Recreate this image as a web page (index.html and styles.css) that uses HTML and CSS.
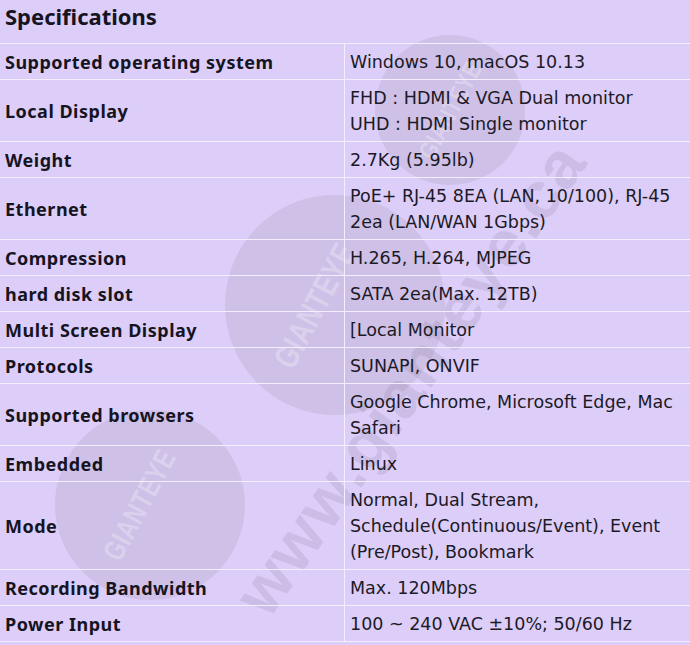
FILE: index.html
```html
<!DOCTYPE html>
<html>
<head>
<meta charset="utf-8">
<link rel="stylesheet" href="styles.css">
</head>
<body>
<div class="page">
  <div class="watermark" aria-hidden="true">
    <div class="wm-circle c1"><span>GIANTEYE</span></div>
    <div class="wm-circle c2"><span>GIANTEYE</span></div>
    <div class="wm-circle c3"><span>GIANTEYE</span></div>
    <div class="wm-url">www.gianteye.ca</div>
  </div>
  <h2 class="title">Specifications</h2>
  <table class="spec">
    <tr><th>Supported operating system</th><td>Windows 10, macOS 10.13</td></tr>
    <tr><th>Local Display</th><td>FHD : HDMI &amp; VGA Dual monitor<br>UHD : HDMI Single monitor</td></tr>
    <tr><th>Weight</th><td>2.7Kg (5.95lb)</td></tr>
    <tr><th>Ethernet</th><td>PoE+ RJ-45 8EA (LAN, 10/100), RJ-45 2ea (LAN/WAN 1Gbps)</td></tr>
    <tr><th>Compression</th><td>H.265, H.264, MJPEG</td></tr>
    <tr><th>hard disk slot</th><td>SATA 2ea(Max. 12TB)</td></tr>
    <tr><th>Multi Screen Display</th><td>[Local Monitor</td></tr>
    <tr><th>Protocols</th><td>SUNAPI, ONVIF</td></tr>
    <tr><th>Supported browsers</th><td>Google Chrome, Microsoft Edge, Mac Safari</td></tr>
    <tr><th>Embedded</th><td>Linux</td></tr>
    <tr><th>Mode</th><td>Normal, Dual Stream,<br>Schedule(Continuous/Event), Event (Pre/Post), Bookmark</td></tr>
    <tr><th>Recording Bandwidth</th><td>Max. 120Mbps</td></tr>
    <tr><th>Power Input</th><td>100 ~ 240 VAC ±10%; 50/60 Hz</td></tr>
  </table>
</div>
</body>
</html>
```
FILE: styles.css
```css
html, body {
  margin: 0;
  padding: 0;
  background: #dccdf9;
}
body {
  font-family: "Noto Sans", "Open Sans", sans-serif;
  color: #16141f;
}
.page {
  position: relative;
  width: 690px;
  height: 645px;
  overflow: hidden;
  background: #dccdf9;
}
.title {
  position: relative;
  z-index: 1;
  margin: 0;
  height: 43px;
  padding: 0 5px;
  font-size: 22px;
  line-height: 33px;
  font-weight: 700;
  border-bottom: 1px solid #f4eefe;
}
.spec {
  position: relative;
  z-index: 1;
  width: 690px;
  border-collapse: collapse;
  table-layout: fixed;
}
.spec th, .spec td {
  line-height: 26px;
  padding: 5px 5px 4px 5px;
  border-bottom: 1px solid #f4eefe;
  vertical-align: middle;
  text-align: left;
}
.spec th {
  width: 334px;
  font-family: "Noto Sans", sans-serif;
  font-size: 18px;
  letter-spacing: 0.5px;
  font-weight: 700;
  border-right: 1px solid #f4eefe;
}
.spec td {
  font-family: "DejaVu Sans", "Noto Sans", sans-serif;
  font-size: 17.5px;
  font-weight: 400;
  color: #1c1a26;
}
.watermark {
  position: absolute;
  inset: 0;
  z-index: 0;
  pointer-events: none;
}
.wm-circle {
  position: absolute;
  border-radius: 50%;
  background: rgba(120, 112, 130, 0.14);
  display: flex;
  align-items: center;
  justify-content: center;
}
.wm-circle span {
  font-family: "Liberation Sans", sans-serif;
  font-weight: 700;
  font-size: 34px;
  letter-spacing: 1px;
  color: rgba(255, 255, 255, 0.28);
  transform: rotate(-62deg) scaleX(0.75);
  white-space: nowrap;
}
.c1 { left: 225px; top: 195px; width: 220px; height: 220px; }
.c1 span { margin-right: 40px; }
.c2 { left: 55px; top: 410px; width: 190px; height: 190px; }
.c2 span { font-size: 30px; margin-right: 20px; }
.c3 { left: 375px; top: 35px; width: 150px; height: 150px; }
.c3 span { font-size: 26px; }
.wm-url {
  position: absolute;
  left: 110px;
  top: 340px;
  width: 600px;
  font-family: "Liberation Sans", sans-serif;
  font-weight: 700;
  font-size: 66px;
  letter-spacing: 2px;
  color: rgba(120, 112, 130, 0.17);
  transform: rotate(-55deg);
  transform-origin: center;
  white-space: nowrap;
  text-align: center;
}
```
